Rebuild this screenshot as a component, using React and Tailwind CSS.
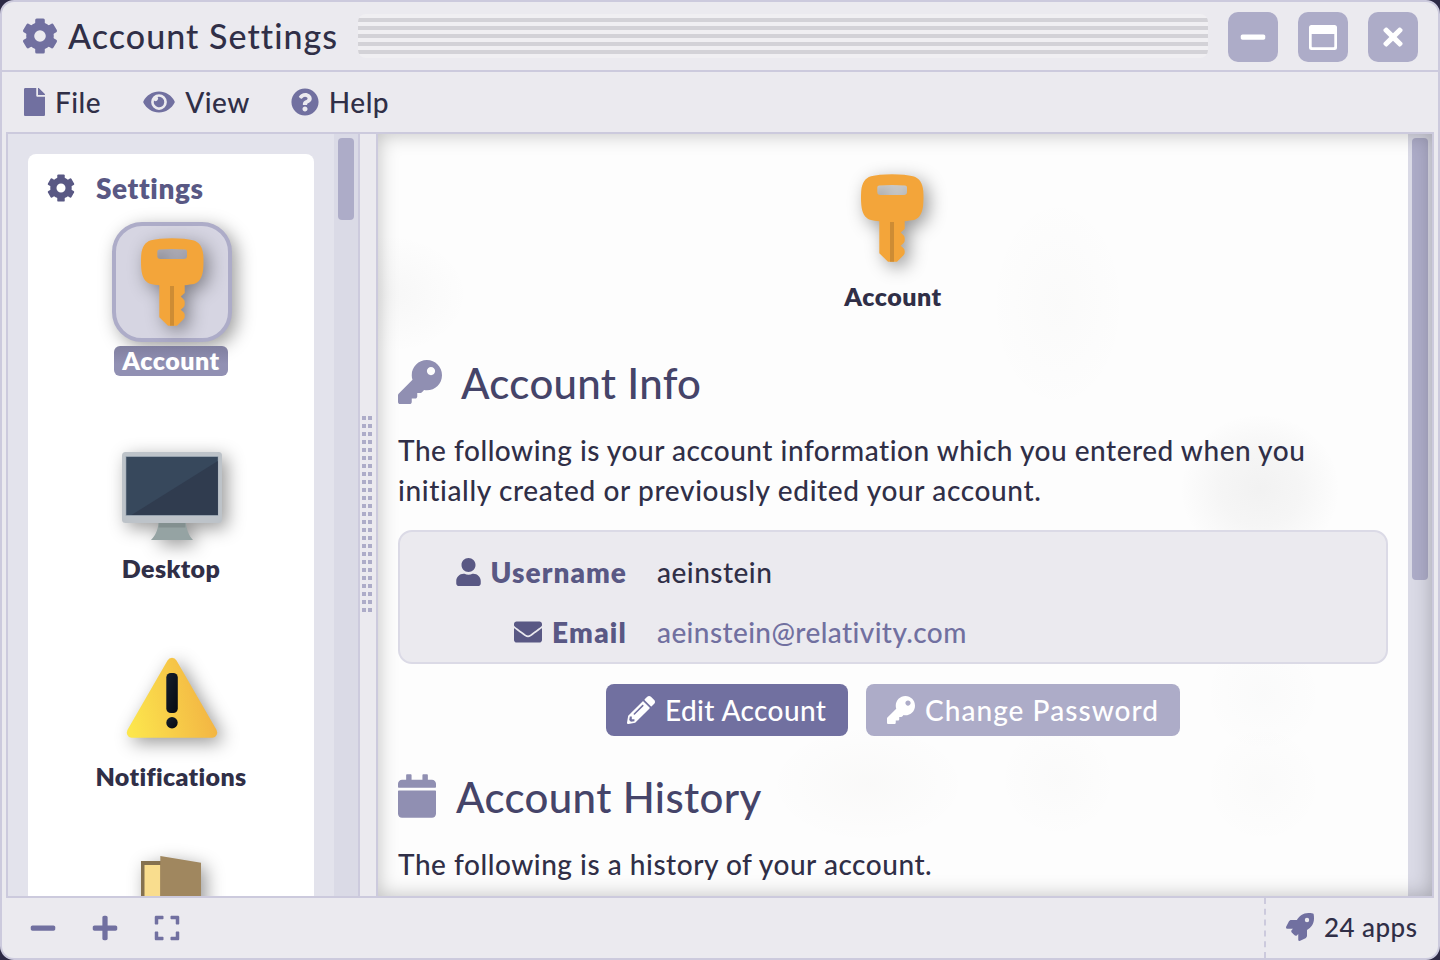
import {
  FaCalendar,
  FaEnvelope,
  FaExpand,
  FaEye,
  FaFile,
  FaKey,
  FaMinus,
  FaPencilAlt,
  FaPlus,
  FaQuestionCircle,
  FaRocket,
  FaTimes,
  FaUser,
} from "react-icons/fa";

function Gear({ className }) {
  return (
    <svg viewBox="0 0 36 36" fill="currentColor" className={className}>
      <path
        fillRule="evenodd"
        d="M18 4.200A13.800 13.800 0 1 1 18 31.800A13.800 13.800 0 1 1 18 4.200ZM18 12.200A5.800 5.800 0 1 0 18 23.800A5.800 5.800 0 1 0 18 12.200Z"
      />
      <g id="teeth">
        <rect x="13.200" y="0.500" width="9.600" height="9" rx="1.500" />
        <rect x="13.200" y="0.500" width="9.600" height="9" rx="1.500" transform="rotate(60 18 18)" />
        <rect x="13.200" y="0.500" width="9.600" height="9" rx="1.500" transform="rotate(120 18 18)" />
        <rect x="13.200" y="0.500" width="9.600" height="9" rx="1.500" transform="rotate(180 18 18)" />
        <rect x="13.200" y="0.500" width="9.600" height="9" rx="1.500" transform="rotate(240 18 18)" />
        <rect x="13.200" y="0.500" width="9.600" height="9" rx="1.500" transform="rotate(300 18 18)" />
      </g>
    </svg>
  );
}

function MaximizeIcon() {
  return (
    <svg viewBox="0 0 28 28" className="size-7">
      <path
        fill="currentColor"
        fillRule="evenodd"
        d="M2.500 2H25.500Q28 2 28 4.500V24.500Q28 27 25.500 27H2.500Q0 27 0 24.500V4.500Q0 2 2.500 2ZM2.700 11V23.500Q2.700 24.300 3.500 24.300H24.500Q25.300 24.300 25.300 23.500V11Z"
      />
    </svg>
  );
}

function KeyArt() {
  return (
    <svg viewBox="0 0 120 120" className="size-[120px] overflow-visible drop-shadow-[5px_5px_9px_rgba(0,0,0,0.4)]">
      <path
        fillRule="evenodd"
        fill="#f3a53a"
        d="M60 16.3C69 16.3 76 17 81 18.3C87.500 20 90.500 25 91.300 33C91.600 38 91.600 42 91.200 47C90.300 56 87 60.500 82 62C79.500 62.500 76 62.700 72.700 63.300V71L68.700 74.500L71.500 77.300Q72.700 78.500 72.700 80V82.500Q72.700 84 71.500 85.200L68.700 87.800L71.500 90.300Q72.700 91.500 72.700 93V94.500Q72.700 96 71.500 97.200L65 103.700H56L47.300 95.300V63.300C44 62.700 41 62.500 38 61.700C33 60 30 55 29.300 47C28.900 42 28.900 38 29.200 33C30 25 33 20 39 18.300C44 17 51 16.300 60 16.300ZM45.300 29.500V34Q45.300 37 48.500 37H71.800Q75 37 75 34V29.500Q75 27.800 73 27.600C64 26.700 56 26.700 47.300 27.600Q45.300 27.800 45.300 29.500Z"
      />
      <rect x="58" y="64" width="4" height="39.700" fill="#cd8c34" />
    </svg>
  );
}

function MonitorArt() {
  return (
    <svg viewBox="0 0 120 120" className="size-[120px] overflow-visible drop-shadow-[5px_5px_9px_rgba(0,0,0,0.4)]">
      <path d="M47 88H73.500C74 99 77 106 81 110H39C44 105 46.500 99 47 88Z" fill="#95a3a3" />
      <path d="M46.800 90H73.400V97.500H46.500Z" fill="#839090" />
      <rect x="10" y="22" width="100" height="71" rx="3.500" fill="#bdc3c9" />
      <rect x="13.700" y="26" width="92.500" height="60" fill="#96a2ae" />
      <rect x="14.300" y="27" width="91.500" height="58" fill="#37485c" />
      <path d="M105.800 31V85H19.500Z" fill="#303c4f" />
    </svg>
  );
}

function WarningArt() {
  return (
    <svg viewBox="0 0 120 120" className="size-[120px] overflow-visible drop-shadow-[5px_5px_9px_rgba(0,0,0,0.4)]">
      <defs>
        <linearGradient id="warn" x1="0" y1="0.700" x2="1" y2="0.500">
          <stop offset="0" stopColor="#fce64d" />
          <stop offset="1" stopColor="#f2b143" />
        </linearGradient>
        <linearGradient id="mark" x1="0" y1="0" x2="1" y2="1">
          <stop offset="0" stopColor="#151f2e" />
          <stop offset="1" stopColor="#070a10" />
        </linearGradient>
      </defs>
      <path
        d="M55.500 22.500Q57 19.800 60 19.800T64.500 22.500L104.600 92Q105.800 94.500 104.600 97T100.600 99.700H19.400Q16.500 99.500 15.400 97T15.400 92Z"
        fill="url(#warn)"
      />
      <rect x="54.300" y="35" width="11.500" height="40" rx="4.500" fill="url(#mark)" />
      <circle cx="60" cy="84.700" r="5.700" fill="url(#mark)" />
    </svg>
  );
}

function DoorArt() {
  return (
    <svg viewBox="0 0 120 120" className="size-[120px] overflow-visible drop-shadow-[5px_5px_9px_rgba(0,0,0,0.4)]">
      <rect x="29" y="15" width="21" height="90" fill="#85714f" />
      <rect x="32.500" y="19" width="16" height="86" fill="#f9dd8e" />
      <path d="M48.300 10L89 16.700V110H48.300Z" fill="#a0875f" />
    </svg>
  );
}

function SidebarItem({ art, label, selected }) {
  return (
    <div className="flex h-[208px] shrink-0 flex-col items-center">
      <div
        className={
          selected
            ? "flex size-[120px] items-center justify-center rounded-[30px] border-4 border-[#adacc8] bg-[#d6d5e2] shadow-[5px_5px_18px_rgba(0,0,0,0.38)]"
            : "flex size-[120px] items-center justify-center"
        }
      >
        <div className="size-[120px] shrink-0">{art}</div>
      </div>
      <div
        className={
          selected
            ? "mt-1 -ml-0.5 h-[30px] rounded-md bg-linear-to-b from-[#807f9f] to-[#9190b3] to-60% px-2 text-[25px] leading-[28px] font-extrabold tracking-[0.5px] text-white"
            : "mt-1 -ml-0.5 h-[30px] px-2 text-[25px] leading-[28px] font-extrabold tracking-[0.35px] text-[#302f47]"
        }
      >
        {label}
      </div>
    </div>
  );
}

function MenuItem({ icon, label }) {
  return (
    <div className="flex items-center gap-[10px]">
      {icon}
      <span className="tracking-[0.5px]">{label}</span>
    </div>
  );
}

function WindowButton({ children }) {
  return (
    <button className="flex size-[50px] items-center justify-center rounded-[10px] bg-[#adacc8] text-white">
      {children}
    </button>
  );
}

export default function App() {
  const grip = Array.from({ length: 50 });
  return (
    <div className="h-[960px] w-[1440px] overflow-hidden bg-[#2d2a45] font-['Lato',sans-serif] font-medium text-[#302f47]">
      <div className="flex h-full flex-col overflow-hidden rounded-[14px] border-2 border-[#cccadd] bg-[#ebeaef]">
        <header className="flex h-[70px] shrink-0 items-center border-b-2 border-[#cccadd] px-5">
          <Gear className="size-9 shrink-0 text-[#7170a0]" />
          <h1 className="ml-2.5 w-[270px] text-[34px] leading-10 font-medium tracking-[1.05px] whitespace-nowrap">
            Account Settings
          </h1>
          <div className="ml-5 flex h-11 flex-1 flex-col gap-1 overflow-hidden rounded-[8px] bg-[#f0eff2] py-1">
            <div className="h-1 shrink-0 bg-[#d3d2d7]" />
            <div className="h-1 shrink-0 bg-[#d3d2d7]" />
            <div className="h-1 shrink-0 bg-[#d3d2d7]" />
            <div className="h-1 shrink-0 bg-[#d3d2d7]" />
            <div className="h-1 shrink-0 bg-[#d3d2d7]" />
          </div>
          <div className="mt-0.5 ml-5 flex gap-5">
            <WindowButton>
              <FaMinus className="size-7" />
            </WindowButton>
            <WindowButton>
              <MaximizeIcon />
            </WindowButton>
            <WindowButton>
              <FaTimes className="size-7" />
            </WindowButton>
          </div>
        </header>

        <nav className="flex h-[60px] shrink-0 items-center gap-[42px] pb-px pl-[22px] text-[28px]">
          <MenuItem icon={<FaFile className="h-7 w-[21px] text-[#7170a0]" />} label="File" />
          <MenuItem icon={<FaEye className="h-7 w-8 text-[#7170a0]" />} label="View" />
          <MenuItem icon={<FaQuestionCircle className="-ml-px size-7 text-[#7170a0]" />} label="Help" />
        </nav>

        <div className="mx-1 flex min-h-0 flex-1 border-2 border-[#cccadd]">
          <aside className="flex w-[350px] shrink-0 bg-[#e3e3ec]">
            <div className="flex w-[326px] flex-col overflow-hidden px-5 pt-5">
              <div className="flex h-[900px] shrink-0 flex-col rounded-t-[8px] bg-white">
                <div className="flex h-[68px] shrink-0 items-center pl-[19px]">
                  <Gear className="size-7 text-[#595884]" />
                  <span className="ml-[21px] text-[28px] font-extrabold tracking-[0.6px] text-[#595884]">Settings</span>
                </div>
                <div className="flex flex-col pl-0.5">
                  <SidebarItem art={<KeyArt />} label="Account" selected />
                  <SidebarItem art={<MonitorArt />} label="Desktop" />
                  <SidebarItem art={<WarningArt />} label="Notifications" />
                  <SidebarItem art={<DoorArt />} label="" />
                </div>
              </div>
            </div>
            <div className="w-6 bg-[#dadae6] p-1">
              <div className="h-[82px] w-4 rounded-[4px] bg-[#adacc8]" />
            </div>
          </aside>

          <div className="flex w-5 shrink-0 items-center border-x-2 border-[#cccadd] pb-0.5 pl-0.5">
            <div className="grid grid-cols-[4px_4px] gap-x-0.5 gap-y-1">
              {grip.map((_, i) => (
                <div key={i} className="size-1 bg-[#adacc8]" />
              ))}
            </div>
          </div>

          <main className="relative flex min-w-0 flex-1 bg-[#fdfdfd]">
            <div className="flex min-w-0 flex-1 flex-col overflow-hidden bg-[radial-gradient(ellipse_80px_75px_at_882px_355px,rgba(60,60,60,0.06),rgba(60,60,60,0.04)_50%,transparent),radial-gradient(ellipse_70px_110px_at_680px_170px,rgba(80,80,60,0.015),transparent),radial-gradient(ellipse_100px_60px_at_490px_650px,rgba(80,60,30,0.018),transparent),radial-gradient(ellipse_60px_60px_at_885px_560px,rgba(60,80,80,0.015),transparent),radial-gradient(ellipse_60px_60px_at_680px_645px,rgba(80,80,60,0.015),transparent),radial-gradient(ellipse_60px_60px_at_885px_650px,rgba(80,80,60,0.015),transparent),radial-gradient(ellipse_80px_60px_at_10px_160px,rgba(60,60,60,0.03),transparent)] px-5">
              <div className="flex h-[218px] shrink-0 flex-col items-center pt-6 pr-0.5">
                <KeyArt />
                <div className="mt-1 ml-0.5 h-[30px] text-[25px] leading-[28px] font-extrabold tracking-[0.5px]">
                  Account
                </div>
              </div>
              <h2 className="flex h-[60px] shrink-0 items-center gap-[19px] text-[42px] leading-[60px] font-medium tracking-[0.3px] text-[#454469]">
                <FaKey className="size-11 text-[#908fb2]" />
                <span className="mt-0.5">Account Info</span>
              </h2>
              <p className="mt-[18px] shrink-0 text-[28px] leading-10 tracking-[0.52px] whitespace-nowrap">
                The following is your account information which you entered when you
                <br />
                <span className="tracking-[0.64px]">initially created or previously edited your account.</span>
              </p>
              <div className="mt-5 grid h-[134px] shrink-0 grid-cols-[227px_1fr] content-start gap-x-[30px] rounded-[14px] border-2 border-[#dbdae6] bg-[#ebeaef] pt-[10px] text-[28px] leading-[60px]">
                <div className="flex items-center justify-end gap-[10px] font-extrabold tracking-[1.05px] text-[#595884]">
                  <FaUser className="h-7 w-[25px]" />
                  Username
                </div>
                <div className="tracking-[0.5px]">aeinstein</div>
                <div className="flex items-center justify-end gap-[10px] font-extrabold tracking-[1.2px] text-[#595884]">
                  <FaEnvelope className="size-7" />
                  Email
                </div>
                <div className="tracking-[0.4px] text-[#7170a0]">aeinstein@relativity.com</div>
              </div>
              <div className="mt-5 flex h-[52px] shrink-0 justify-center gap-[18px] text-[28px] text-white">
                <button className="flex w-[242px] items-center gap-[10px] rounded-[8px] bg-[#7170a0] pl-[21px] tracking-[0.4px]">
                  <FaPencilAlt className="size-7" />
                  Edit Account
                </button>
                <button className="flex w-[314px] items-center gap-[10px] rounded-[8px] bg-[#adacc8] pl-[21px] tracking-[1.05px]">
                  <FaKey className="size-7" />
                  Change Password
                </button>
              </div>
              <h2 className="mt-[30px] flex h-[60px] shrink-0 items-center gap-5 text-[42px] leading-[60px] font-medium tracking-[0.35px] text-[#454469]">
                <FaCalendar className="h-11 w-[38px] text-[#908fb2]" />
                <span className="mt-0.5">Account History</span>
              </h2>
              <p className="mt-[18px] shrink-0 text-[28px] leading-10 tracking-[0.53px]">
                The following is a history of your account.
              </p>
            </div>
            <div className="w-6 shrink-0 bg-[#dadae6] p-1">
              <div className="h-[442px] w-4 rounded-[4px] bg-[#adacc8]" />
            </div>
            <div className="pointer-events-none absolute inset-0 shadow-[inset_0_0_20px_rgba(0,0,0,0.25)]" />
          </main>
        </div>

        <footer className="flex h-[60px] shrink-0 items-center pl-[27px] text-[#7170a0]">
          <FaMinus className="mb-px size-7" />
          <FaPlus className="mb-px ml-[34px] size-7" />
          <FaExpand className="mb-px ml-[34px] size-7" />
          <div className="ml-auto flex h-full w-[174px] items-center border-l-2 border-dashed border-[#cccadd] pb-0.5 pl-5">
            <FaRocket className="size-7" />
            <span className="ml-[10px] text-[26px] tracking-[0.45px] text-[#302f47]">24 apps</span>
          </div>
        </footer>
      </div>
    </div>
  );
}
